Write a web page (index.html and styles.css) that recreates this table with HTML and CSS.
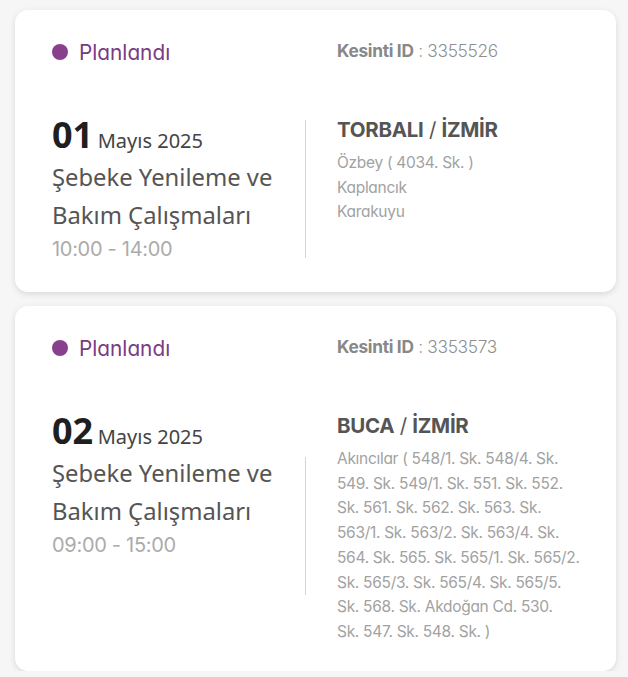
FILE: index.html
```html
<!DOCTYPE html>
<html lang="tr">
<head>
<meta charset="utf-8">
<link rel="stylesheet" href="styles.css">
</head>
<body>
<div class="list">
  <div class="card">
    <div class="head">
      <div class="status"><span class="dot"></span><span class="status-text">Planlandı</span></div>
      <div class="kid"><b>Kesinti ID</b> : 3355526</div>
    </div>
    <div class="body">
      <div class="left">
        <div class="date"><span class="day">01</span> <span class="month">Mayıs 2025</span></div>
        <div class="title">Şebeke Yenileme ve Bakım Çalışmaları</div>
        <div class="time">10:00 - 14:00</div>
      </div>
      <div class="divider"></div>
      <div class="right">
        <div class="place"><b>TORBALI</b> <span class="slash">/</span> <b>İZMİR</b></div>
        <div class="streets">Özbey ( 4034. Sk. )<br>Kaplancık<br>Karakuyu</div>
      </div>
    </div>
  </div>
  <div class="card">
    <div class="head">
      <div class="status"><span class="dot"></span><span class="status-text">Planlandı</span></div>
      <div class="kid"><b>Kesinti ID</b> : 3353573</div>
    </div>
    <div class="body">
      <div class="left">
        <div class="date"><span class="day">02</span> <span class="month">Mayıs 2025</span></div>
        <div class="title">Şebeke Yenileme ve Bakım Çalışmaları</div>
        <div class="time">09:00 - 15:00</div>
      </div>
      <div class="divider"></div>
      <div class="right">
        <div class="place"><b>BUCA</b> <span class="slash">/</span> <b>İZMİR</b></div>
        <div class="streets">Akıncılar ( 548/1. Sk. 548/4. Sk.<br>549. Sk. 549/1. Sk. 551. Sk. 552.<br>Sk. 561. Sk. 562. Sk. 563. Sk.<br>563/1. Sk. 563/2. Sk. 563/4. Sk.<br>564. Sk. 565. Sk. 565/1. Sk. 565/2.<br>Sk. 565/3. Sk. 565/4. Sk. 565/5.<br>Sk. 568. Sk. Akdoğan Cd. 530.<br>Sk. 547. Sk. 548. Sk. )</div>
      </div>
    </div>
  </div>
</div>
</body>
</html>
```
FILE: styles.css
```css
html, body {
  margin: 0;
  padding: 0;
  background: #f6f6f6;
}
body {
  font-family: "Inter", "Lato", sans-serif;
  font-feature-settings: "cv11";
}
.list {
  display: flex;
  flex-direction: column;
  gap: 14px;
  padding: 10px 12px 0 15px;
}
.card {
  background: #fff;
  border-radius: 13px;
  box-shadow: 0 2px 6px rgba(0,0,0,0.12);
  padding: 31px 30px 20px 37px;
}
.head {
  display: flex;
  align-items: center;
  height: 22px;
}
.status {
  width: 285px;
  display: flex;
  align-items: center;
  gap: 11px;
}
.dot {
  width: 16px;
  height: 16px;
  border-radius: 50%;
  background: #883f8c;
}
.status-text {
  color: #7a3a82;
  font-size: 20.8px;
}
.kid {
  color: #8f8f8f;
  font-size: 17.3px;
  letter-spacing: -0.3px;
  margin-top: -4px;
  font-weight: 300;
}
.kid b {
  color: #888;
  font-weight: 700;
}
.body {
  display: flex;
  align-items: flex-start;
  margin-top: 55px;
  min-height: 154px;
}
.left {
  width: 253px;
  flex: none;
}
.date {
  color: #222;
  line-height: 34px;
  white-space: nowrap;
}
.day {
  font-family: "Noto Sans", sans-serif;
  font-weight: 700;
  font-size: 36px;
  color: #1f1f1f;
}
.month {
  font-family: "Noto Sans", sans-serif;
  font-size: 20px;
  color: #444;
}
.title {
  font-family: "Noto Sans", sans-serif;
  font-size: 23.8px;
  line-height: 38px;
  color: #555;
  margin-top: -1px;
}
.time {
  font-size: 20px;
  color: #ababab;
  line-height: 24px;
  letter-spacing: -0.3px;
  margin-top: 3px;
}
.divider {
  width: 1px;
  height: 138px;
  background: #d4d4d4;
  align-self: center;
  flex: none;
  margin-bottom: 12px;
}
.right {
  padding-left: 31px;
  padding-bottom: 6px;
  flex: 1;
}
.place {
  color: #555;
  font-size: 20.5px;
  line-height: 24px;
  letter-spacing: -0.3px;
}
.place b { font-weight: 700; }
.slash { font-weight: 400; }
.streets {
  color: #a2a2a2;
  font-size: 15.5px;
  line-height: 24.7px;
  margin-top: 9px;
  letter-spacing: -0.3px;
  white-space: nowrap;
}
```
